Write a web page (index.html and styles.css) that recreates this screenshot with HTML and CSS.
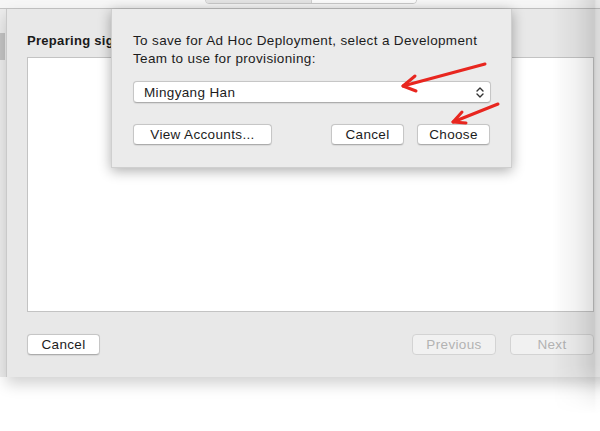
FILE: index.html
```html
<!DOCTYPE html>
<html>
<head>
<meta charset="utf-8">
<link rel="stylesheet" href="styles.css">
</head>
<body>
  <div class="toolbar">
    <div class="seg"><span class="seg-a"></span><span class="seg-b"></span></div>
  </div>
  <div class="stage">
    <div class="side"><div class="side-sel"></div></div>
    <div class="window">
      <h1 class="title">Preparing signing identities…</h1>
      <div class="log"></div>
      <div class="actions">
        <button class="btn btn-cancel">Cancel</button>
        <span class="spacer"></span>
        <button class="btn btn-nav" disabled>Previous</button>
        <button class="btn btn-nav" disabled>Next</button>
      </div>

      <div class="sheet">
        <p class="prompt">To save for Ad Hoc Deployment, select a Development Team to use for provisioning:</p>
        <div class="popup">
          <span class="popup-label">Mingyang Han</span>
          <svg class="chev" width="8" height="13" viewBox="0 0 8 13">
            <path d="M1 5 L4 2 L7 5" fill="none" stroke="#333" stroke-width="1.4" stroke-linecap="round" stroke-linejoin="round"/>
            <path d="M1 8 L4 11 L7 8" fill="none" stroke="#333" stroke-width="1.4" stroke-linecap="round" stroke-linejoin="round"/>
          </svg>
        </div>
        <div class="sheet-actions">
          <button class="btn btn-accounts">View Accounts...</button>
          <span class="spacer"></span>
          <button class="btn btn-sheet">Cancel</button>
          <button class="btn btn-sheet">Choose</button>
        </div>
      </div>
    </div>
  </div>
  <div class="edge-shadow"></div>
  <svg class="arrows" width="600" height="431" viewBox="0 0 600 431">
    <g fill="none" stroke="#e8261f" stroke-width="3" stroke-linecap="round" stroke-linejoin="round">
      <path d="M485 64 L403 86"/>
      <path d="M415 76 L403 86 L416 91"/>
      <path d="M498 104 L453 122"/>
      <path d="M462 112 L453 122 L466 123"/>
    </g>
  </svg>
</body>
</html>
```
FILE: styles.css
```css
html, body {
  margin: 0;
  padding: 0;
  width: 600px;
  height: 431px;
  overflow: hidden;
  background: #ffffff;
  font-family: "Liberation Sans", Arial, sans-serif;
  font-size: 13.5px;
  letter-spacing: 0.35px;
  color: #1c1c1c;
}

body {
  position: relative;
}

.toolbar {
  height: 8px;
  background: #f6f6f6;
  border-bottom: 1px solid #c4c4c4;
  position: relative;
}

.seg {
  position: absolute;
  left: 205px;
  top: -6px;
  width: 210px;
  height: 8px;
  display: flex;
  border: 1px solid #c9c9c9;
  border-radius: 4px;
  overflow: hidden;
}

.seg-a {
  width: 105px;
  background: #e4e4e4;
  border-right: 1px solid #cfcfcf;
}

.seg-b {
  flex: 1;
  background: #fbfbfb;
}

.stage {
  display: flex;
  align-items: stretch;
}

.side {
  width: 6px;
  flex: none;
  background: #ececec;
  padding-top: 24px;
}

.side-sel {
  height: 27px;
  width: 5px;
  background: #c3c3c3;
}

.window {
  position: relative;
  width: 609px;
  flex: none;
  box-sizing: border-box;
  background: #e8e8e8;
  border-left: 1px solid #c9c9c9;
  padding: 24px 21px 22px 20px;
  box-shadow: 0 7px 14px rgba(0, 0, 0, 0.18);
}

.title {
  margin: 0 0 8px;
  width: 86px;
  overflow: hidden;
  font-size: 13px;
  line-height: 16px;
  font-weight: bold;
  letter-spacing: 0.3px;
  color: #1a1a1a;
  white-space: nowrap;
}

.log {
  height: 255px;
  box-sizing: border-box;
  background: #ffffff;
  border: 1px solid #c3c3c3;
}

.actions {
  display: flex;
  gap: 14px;
  margin-top: 22px;
}

.spacer {
  flex: 1;
}

.btn {
  height: 21px;
  box-sizing: border-box;
  padding: 0;
  font-family: "Liberation Sans", Arial, sans-serif;
  font-size: 13.5px;
  letter-spacing: 0.35px;
  line-height: 19px;
  color: #1c1c1c;
  background: #ffffff;
  border: 1px solid #c6c6c6;
  border-bottom-color: #acacac;
  border-radius: 4px;
  box-shadow: 0 0.5px 1px rgba(0, 0, 0, 0.08);
  text-align: center;
}

.btn-cancel {
  width: 73px;
}

.btn-nav {
  width: 84px;
  background: #f1f1f1;
  color: #b3b3b3;
  border-color: #d3d3d3;
  box-shadow: none;
}

.sheet {
  position: absolute;
  left: 104px;
  top: 0;
  width: 401px;
  box-sizing: border-box;
  padding: 23px 21px 22px;
  background: #ebebeb;
  border: 1px solid #cfcfcf;
  border-top: none;
  box-shadow: 0 3px 12px rgba(0, 0, 0, 0.32);
}

.prompt {
  margin: 0;
  line-height: 18px;
  color: #1c1c1c;
  width: 356px;
}

.popup {
  margin-top: 13px;
  width: 358px;
  height: 22px;
  box-sizing: border-box;
  display: flex;
  align-items: center;
  padding: 0 6px 0 10px;
  background: #ffffff;
  border: 1px solid #c6c6c6;
  border-bottom-color: #adadad;
  border-radius: 4px;
  box-shadow: 0 0.5px 1px rgba(0, 0, 0, 0.08);
}

.popup-label {
  flex: 1;
  color: #1c1c1c;
}

.chev {
  display: block;
}

.sheet-actions {
  display: flex;
  gap: 13px;
  margin-top: 21px;
}

.btn-accounts {
  width: 139px;
}

.btn-sheet {
  width: 73px;
}

.edge-shadow {
  position: absolute;
  left: 552px;
  top: 0;
  width: 48px;
  height: 414px;
  background: linear-gradient(to right, rgba(0, 0, 0, 0) 0%, rgba(0, 0, 0, 0.05) 50%, rgba(0, 0, 0, 0.13) 88%, rgba(0, 0, 0, 0.07) 92%, rgba(0, 0, 0, 0.05) 100%);
  -webkit-mask-image: linear-gradient(to bottom, #000 88%, transparent 100%);
  mask-image: linear-gradient(to bottom, #000 88%, transparent 100%);
  pointer-events: none;
}

.arrows {
  position: absolute;
  left: 0;
  top: 0;
  pointer-events: none;
}
```
